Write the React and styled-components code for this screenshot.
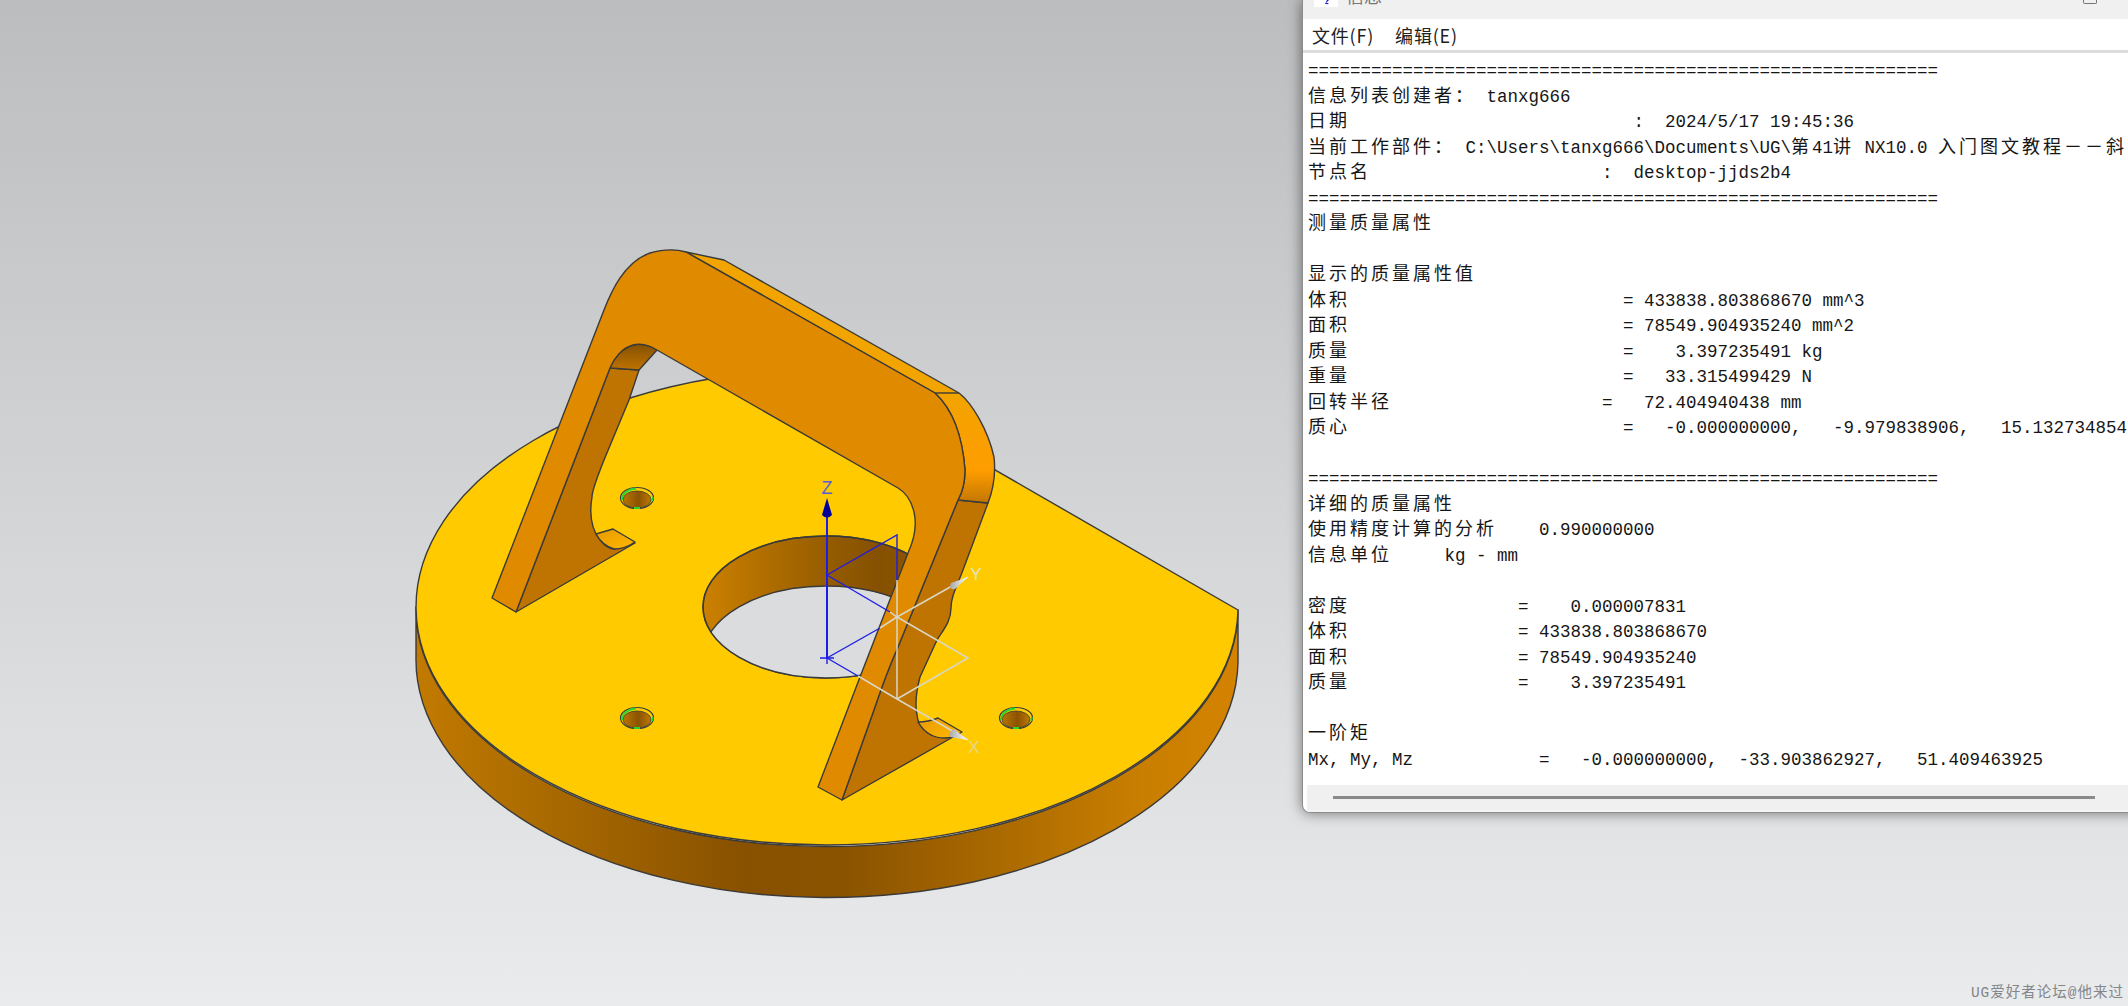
import React from "react";
import styled, { createGlobalStyle } from "styled-components";

const GlobalStyle = createGlobalStyle`
  html, body {
    margin: 0;
    padding: 0;
    background: #d8d9db;
  }
`;

// Page and graphics area
const Page = styled.div`
  position: relative;
  width: 2128px;
  height: 1006px;
  overflow: hidden;
  background: linear-gradient(180deg, #bbbdbf 0%, #eaebec 100%);
`;

const ModelView = styled.svg`
  display: block;
  width: 2128px;
  height: 1006px;
`;

const Watermark = styled.div`
  position: absolute;
  right: 4px;
  bottom: 5px;
  font-family: "Liberation Mono", "Noto Sans CJK SC", monospace;
  font-size: 14.5px;
  letter-spacing: 1px;
  line-height: 16px;
  color: #84868a;
`;

// Information window
const InfoWindow = styled.div`
  position: absolute;
  left: 1302px;
  top: 0;
  width: 840px;
  height: 813px;
  display: flex;
  flex-direction: column;
  box-sizing: border-box;
  border: 1px solid #8c8c8c;
  border-top: 0;
  border-radius: 0 0 8px 8px;
  background: #ffffff;
  box-shadow: 0 0 14px rgba(0, 0, 0, 0.5);
  overflow: hidden;
`;

const TitleBar = styled.div`
  height: 19px;
  flex: none;
  display: flex;
  align-items: flex-start;
  background: #f0f0f0;
  overflow: hidden;
`;

const TitleIcon = styled.div`
  width: 24px;
  height: 7px;
  margin-left: 11px;
  display: flex;
  justify-content: center;
  background: #ffffff;
`;

const TitleText = styled.div`
  margin: -15px 0 0 8px;
  font-family: "Noto Sans CJK SC", sans-serif;
  font-size: 18px;
  line-height: 20px;
  color: #777;
`;

const WindowButton = styled.div`
  width: 12px;
  height: 3px;
  margin: 0 0 0 auto;
  margin-right: 44px;
  border: 1px solid #777;
  border-top: 0;
  border-radius: 0 0 2px 2px;
`;

const MenuBar = styled.div`
  height: 31px;
  flex: none;
  display: flex;
  align-items: center;
  gap: 21px;
  padding-left: 9px;
  box-sizing: border-box;
  background: #ffffff;
`;

const MenuItem = styled.div`
  font-family: "Noto Sans CJK SC", sans-serif;
  font-size: 18px;
  letter-spacing: 0.8px;
  line-height: 22px;
  color: #222;
`;

const MenuRule = styled.div`
  height: 3px;
  flex: none;
  background: #dcdcdc;
`;

const TextArea = styled.div`
  flex: 1;
  min-height: 0;
  padding: 6px 0 0 5px;
  overflow: hidden;
`;

const TextLine = styled.div`
  height: 25.52px;
  line-height: 25.52px;
  white-space: pre;
  font-family: "Liberation Mono", monospace;
  font-size: 17.5px;
  color: #161616;
`;

const Cjk = styled.span`
  font-family: "Noto Sans CJK SC", sans-serif;
  font-size: 18px;
  letter-spacing: 3px;
  line-height: 1;
`;

const ScrollTrack = styled.div`
  height: 25px;
  flex: none;
  margin-left: 4px;
  display: flex;
  align-items: center;
  background: #f0f0f0;
`;

const ScrollThumb = styled.div`
  width: 762px;
  height: 3px;
  margin-left: 26px;
  background: #8a8a8a;
`;

const WindowFoot = styled.div`
  height: 2px;
  flex: none;
  background: #f4f4f4;
`;

const SEP = "=".repeat(60);

const LINES = [
  SEP,
  "信息列表创建者： tanxg666",
  "日期" + " ".repeat(27) + ":  2024/5/17 19:45:36",
  "当前工作部件： C:\\Users\\tanxg666\\Documents\\UG\\第41讲 NX10.0 入门图文教程－－斜",
  "节点名" + " ".repeat(22) + ":  desktop-jjds2b4",
  SEP,
  "测量质量属性",
  "",
  "显示的质量属性值",
  "体积" + " ".repeat(26) + "= 433838.803868670 mm^3",
  "面积" + " ".repeat(26) + "= 78549.904935240 mm^2",
  "质量" + " ".repeat(26) + "=    3.397235491 kg",
  "重量" + " ".repeat(26) + "=   33.315499429 N",
  "回转半径" + " ".repeat(20) + "=   72.404940438 mm",
  "质心" + " ".repeat(26) + "=   -0.000000000,   -9.979838906,   15.132734854",
  "",
  SEP,
  "详细的质量属性",
  "使用精度计算的分析    0.990000000",
  "信息单位     kg - mm",
  "",
  "密度" + " ".repeat(16) + "=    0.000007831",
  "体积" + " ".repeat(16) + "= 433838.803868670",
  "面积" + " ".repeat(16) + "= 78549.904935240",
  "质量" + " ".repeat(16) + "=    3.397235491",
  "",
  "一阶矩",
  "Mx, My, Mz" + " ".repeat(12) + "=   -0.000000000,  -33.903862927,   51.409463925",
];

const InfoLine = ({ text }) => {
  const parts = text.split(/([\u3000-\u9fff\uff00-\uffef]+)/);
  return (
    <TextLine>
      {parts.map((part, i) => (i % 2 ? <Cjk key={i}>{part}</Cjk> : part))}
      {text === "" ? " " : null}
    </TextLine>
  );
};

// Counterbored mounting hole on the plate
const SmallHole = ({ cx, cy }) => (
  <g>
    <ellipse cx={cx} cy={cy} rx="16.5" ry="10.5" fill="#ffcb00" stroke="#3c3c3c" strokeWidth="1.2" />
    <ellipse cx={cx} cy={cy + 1.5} rx="14" ry="8.5" fill="url(#holeWall)" stroke="#3c3c3c" strokeWidth="0.8" />
    <path
      d={`M${cx - 15} ${cy + 2} C${cx - 15} ${cy - 5} ${cx - 8} ${cy - 9} ${cx - 1} ${cy - 9.5}`}
      fill="none"
      stroke="#22d82e"
      strokeWidth="1.8"
    />
    <path
      d={`M${cx - 3} ${cy + 10} L${cx + 3} ${cy + 10} M${cx + 15} ${cy + 3} L${cx + 16} ${cy - 1}`}
      fill="none"
      stroke="#22d82e"
      strokeWidth="1.8"
    />
  </g>
);

const Model = () => (
  <ModelView viewBox="0 0 2128 1006" xmlns="http://www.w3.org/2000/svg">
    <defs>
      <linearGradient id="plateSide" gradientUnits="userSpaceOnUse" x1="416" y1="0" x2="1238" y2="0">
        <stop offset="0" stopColor="#c27a00" />
        <stop offset="0.1" stopColor="#b27000" />
        <stop offset="0.4" stopColor="#885100" />
        <stop offset="0.52" stopColor="#8a5300" />
        <stop offset="0.88" stopColor="#c87e00" />
        <stop offset="1" stopColor="#d48300" />
      </linearGradient>
      <linearGradient id="boreWall" gradientUnits="userSpaceOnUse" x1="703" y1="0" x2="950" y2="0">
        <stop offset="0" stopColor="#cb8000" />
        <stop offset="0.55" stopColor="#915900" />
        <stop offset="0.72" stopColor="#855000" />
        <stop offset="1" stopColor="#955c00" />
      </linearGradient>
      <linearGradient id="holeWall" x1="0" y1="0" x2="1" y2="0">
        <stop offset="0" stopColor="#bb7600" />
        <stop offset="0.55" stopColor="#8a5300" />
        <stop offset="1" stopColor="#c07a00" />
      </linearGradient>
      <linearGradient id="archWall" gradientUnits="userSpaceOnUse" x1="0" y1="345" x2="0" y2="370">
        <stop offset="0" stopColor="#875200" />
        <stop offset="1" stopColor="#bf7300" />
      </linearGradient>
      <linearGradient id="bendWall" gradientUnits="userSpaceOnUse" x1="0" y1="393" x2="0" y2="503">
        <stop offset="0" stopColor="#f2a400" />
        <stop offset="0.7" stopColor="#ff9d00" />
        <stop offset="1" stopColor="#c27600" />
      </linearGradient>
      <linearGradient id="notch" x1="0" y1="0" x2="1" y2="1">
        <stop offset="0" stopColor="#e89a00" />
        <stop offset="1" stopColor="#ffb800" />
      </linearGradient>
      <linearGradient id="cone" x1="0" y1="0" x2="1" y2="0">
        <stop offset="0" stopColor="#a8a8a8" />
        <stop offset="1" stopColor="#ffffff" />
      </linearGradient>
      <clipPath id="boreClip">
        <ellipse cx="826" cy="607" rx="123" ry="71" />
      </clipPath>
    </defs>

    <g stroke="#3a3a3a" strokeWidth="1.4" strokeLinejoin="round">
      {/* plate */}
      <path d="M416 607 A411 238 0 0 0 1238 610 L1238 662 A411 238 0 0 1 416 657 Z" fill="url(#plateSide)" />
      <path d="M1238 610 A411 238 0 1 1 820 369 Z" fill="#ffcb00" />

      {/* centre bore */}
      <ellipse cx="826" cy="607" rx="123" ry="71" fill="url(#boreWall)" />
      <ellipse cx="826" cy="657" rx="123" ry="71" fill="#dadcde" clipPath="url(#boreClip)" />
      <ellipse cx="826" cy="607" rx="123" ry="71" fill="none" />

      <SmallHole cx={637} cy={498} />
      <SmallHole cx={637} cy={718} />
      <SmallHole cx={1016} cy={718} />

      {/* left leg */}
      <path
        d="M516 612 L610 368 L639 370 L629 400 L604 460 C597 478 592 490 592 497 C589 515 592 530 600 540 C605 546 610 549 614 549 L635 543 Z"
        fill="#bf7300"
      />
      <path d="M610 368 C614 358 622 348 633 345 C640 343 650 345 657 350 L639 370 Z" fill="url(#archWall)" />
      <path d="M596 534 L613 529 L635 542 Q625 549 614 549 Q602 545 596 534 Z" fill="url(#notch)" />

      {/* right leg */}
      <path
        d="M958 500 L988 503 L963 570 C956 588 951 597 951 608 C951 622 943 630 937 640 L920 677 C916 692 915 705 917 715 C918 725 925 735 940 737 L953 737 L842 800 L875 707 C880 692 890 665 898 647 Z"
        fill="#bf7300"
      />
      <path d="M918 722 Q928 722 938 718 L962 732 L953 737 Q930 742 918 722 Z" fill="url(#notch)" />

      {/* bar thickness and bend */}
      <path
        d="M686 252 L724 260 L959 393 C972 403 988 430 994 457 C996 475 993 490 988 503 L958 500 C962 493 965 482 965 470 C962 430 950 407 935 393 Z"
        fill="url(#bendWall)"
      />
      <path d="M935 393 L959 393" fill="none" />

      {/* front face */}
      <path
        d="M492 598 L604 310 C611 292 624 262 650 253 C664 249 676 249 686 252 L935 393 C950 407 962 430 965 470 C965 482 962 493 958 500 L898 647 C890 665 880 692 875 707 L842 800 L818 787 L860 677 L908 553 C914 540 917 525 914 512 C911 500 905 492 898 488 L657 350 C650 345 640 343 633 345 C622 348 614 358 610 368 L516 612 Z"
        fill="#e08a00"
      />
    </g>

    {/* work coordinate system, blue part */}
    <g stroke="#1d1de8" strokeWidth="1.4" fill="none">
      <path d="M827 658 L827 515" strokeWidth="2" />
      <path d="M827 575 L897 535 L897 580" />
      <path d="M827 575 L890 612" />
      <path d="M827 658 L880 628" />
      <path d="M827 658 L858 676" />
      <path d="M820 658 L834 658 M827 652 L827 664" />
    </g>
    <path d="M827 498 L832 515 Q827 520 822 515 Z" fill="#00009a" />
    <text x="827" y="494" textAnchor="middle" fontFamily="Liberation Sans, sans-serif" fontSize="18" fill="#5a5ad8">
      Z
    </text>

    {/* work coordinate system, grey part */}
    <g stroke="#d9d6c8" strokeWidth="1.5" fill="none">
      <path d="M897 580 L897 699" />
      <path d="M880 628 L897 617 L968 577" />
      <path d="M890 612 L897 617 L968 658 L897 699" />
      <path d="M858 676 L897 699 L968 740" />
    </g>
    <path d="M968 577 L951 583 Q948 590 955 589 Z" fill="url(#cone)" />
    <path d="M968 740 L954 729 Q947 733 950 737 Z" fill="url(#cone)" />
    <text x="976" y="580" textAnchor="middle" fontFamily="Liberation Sans, sans-serif" fontSize="17" fill="#e6e2c8">
      Y
    </text>
    <text x="974" y="753" textAnchor="middle" fontFamily="Liberation Sans, sans-serif" fontSize="17" fill="#e6d88a">
      X
    </text>
  </ModelView>
);

const App = () => {
  return (
    <Page>
      <GlobalStyle />
      <Model />
      <InfoWindow>
        <TitleBar>
          <TitleIcon>
            <svg width="12" height="7" viewBox="0 0 12 7">
              <path d="M7 0 L5 4 L8 4 L4 7 L9 3 L6 3 L9 0 Z" fill="#1a1ad0" />
            </svg>
          </TitleIcon>
          <TitleText>信息</TitleText>
          <WindowButton />
        </TitleBar>
        <MenuBar>
          <MenuItem>文件(F)</MenuItem>
          <MenuItem>编辑(E)</MenuItem>
        </MenuBar>
        <MenuRule />
        <TextArea>
          {LINES.map((text, i) => (
            <InfoLine key={i} text={text} />
          ))}
        </TextArea>
        <ScrollTrack>
          <ScrollThumb />
        </ScrollTrack>
        <WindowFoot />
      </InfoWindow>
      <Watermark>UG爱好者论坛@他来过</Watermark>
    </Page>
  );
};

export default App;
